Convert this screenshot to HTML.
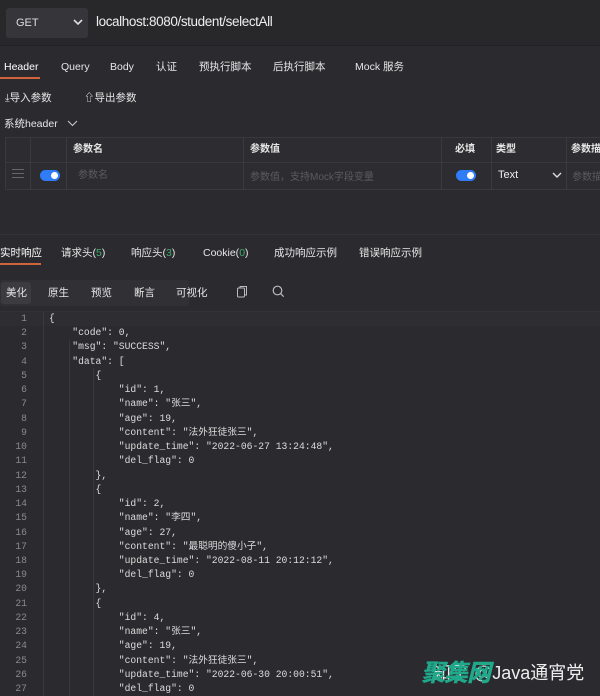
<!DOCTYPE html>
<html><head><meta charset="utf-8"><style>
*{margin:0;padding:0;box-sizing:border-box}
body{width:600px;height:696px;background:#2b2b2f;color:#e6e6e6;font-family:"Liberation Sans","Noto Sans CJK SC",sans-serif;font-size:11px;position:relative;overflow:hidden}
.a{position:absolute;white-space:nowrap;line-height:14px}
.top{left:0;top:0;width:600px;height:46px;background:#28282b;border-bottom:1px solid #232325}
.get{left:6px;top:8px;width:82px;height:30px;background:#35353a;border-radius:3px}
.mono{font-family:"Liberation Mono","Noto Sans CJK SC",monospace;font-size:9.7px;color:#dcdcdc}
.cell{position:absolute;border-right:1px solid #3a3a3f}
.tog{position:absolute;width:20px;height:11px;border-radius:6px;background:#2f7cf6}
.tog::after{content:"";position:absolute;right:2px;top:2px;width:7px;height:7px;border-radius:50%;background:#fff}
.g{color:#3fae6e}
.t{font-size:10.5px;top:60px}
</style></head><body>
<div class="a top"></div>
<div class="a get"></div>
<div class="a" style="left:16px;top:16px;font-size:11px;color:#ddd">GET</div>
<svg class="a" style="left:73px;top:18px" width="10" height="8"><path d="M1 2l4 4 4-4" stroke="#ddd" stroke-width="1.6" fill="none"/></svg>
<div class="a" style="left:96px;top:15px;font-size:13.5px;color:#eee;letter-spacing:-0.4px">localhost:8080/student/selectAll</div>

<div class="a t" style="left:4px;color:#fff">Header</div>
<div class="a" style="left:0;top:77px;width:40px;height:2px;background:#d0643a"></div>
<div class="a t" style="left:61px">Query</div>
<div class="a t" style="left:110px">Body</div>
<div class="a t" style="left:156px">认证</div>
<div class="a t" style="left:199px">预执行脚本</div>
<div class="a t" style="left:273px">后执行脚本</div>
<div class="a t" style="left:355px">Mock 服务</div>

<div class="a" style="left:5px;top:91px;font-size:10.5px">⤓导入参数</div>
<div class="a" style="left:84px;top:91px;font-size:10.5px">⇧导出参数</div>
<div class="a" style="left:4px;top:117px;font-size:10.5px">系统header</div>
<svg class="a" style="left:67px;top:120px" width="11" height="7"><path d="M1 1l4.5 4.5L10 1" stroke="#ccc" stroke-width="1" fill="none"/></svg>

<div class="a" style="left:5px;top:137px;width:600px;height:53px;border:1px solid #38383d;background:#2d2d31"></div>
<div class="a" style="left:5px;top:162px;width:600px;height:1px;background:#38383d"></div>
<div class="cell" style="left:5px;top:137px;width:26px;height:53px"></div>
<div class="cell" style="left:31px;top:137px;width:36px;height:53px"></div>
<div class="cell" style="left:67px;top:137px;width:177px;height:53px"></div>
<div class="cell" style="left:244px;top:137px;width:198px;height:53px"></div>
<div class="cell" style="left:442px;top:137px;width:50px;height:53px"></div>
<div class="cell" style="left:492px;top:137px;width:75px;height:53px"></div>
<div class="a" style="left:73px;top:143px;font-size:10px;font-weight:bold">参数名</div>
<div class="a" style="left:250px;top:143px;font-size:10px;font-weight:bold">参数值</div>
<div class="a" style="left:455px;top:143px;font-size:10px;font-weight:bold">必填</div>
<div class="a" style="left:496px;top:143px;font-size:10px;font-weight:bold">类型</div>
<div class="a" style="left:571px;top:143px;font-size:10px;font-weight:bold">参数描</div>
<div class="a" style="left:12px;top:169px;width:12px;height:1px;background:#666;box-shadow:0 4px #666,0 8px #666"></div>
<div class="tog" style="left:40px;top:170px"></div>
<div class="tog" style="left:456px;top:170px"></div>
<div class="a" style="left:78px;top:169px;font-size:10px;color:#5c5c60">参数名</div>
<div class="a" style="left:250px;top:171px;font-size:10px;color:#5c5c60">参数值，支持Mock字段变量</div>
<div class="a" style="left:498px;top:168px;font-size:11px;color:#eee">Text</div>
<svg class="a" style="left:552px;top:172px" width="10" height="7"><path d="M1 1l4 4 4-4" stroke="#ddd" stroke-width="1.4" fill="none"/></svg>
<div class="a" style="left:572px;top:171px;font-size:10px;color:#5c5c60">参数描</div>

<div class="a" style="left:0;top:234px;width:600px;height:1px;background:#333337"></div>
<div class="a" style="left:0;top:246px;font-size:10.5px;color:#fff">实时响应</div>
<div class="a" style="left:0;top:263px;width:41px;height:2px;background:#d0643a"></div>
<div class="a" style="left:61px;top:246px;font-size:10.5px">请求头(<span class="g">5</span>)</div>
<div class="a" style="left:131px;top:246px;font-size:10.5px">响应头(<span class="g">3</span>)</div>
<div class="a" style="left:203px;top:246px;font-size:10.5px">Cookie(<span class="g">0</span>)</div>
<div class="a" style="left:274px;top:246px;font-size:10.5px">成功响应示例</div>
<div class="a" style="left:359px;top:246px;font-size:10.5px">错误响应示例</div>

<div class="a" style="left:0;top:280px;width:189px;height:26px;background:#313135;border-radius:3px"></div>
<div class="a" style="left:1px;top:282px;width:30px;height:22px;background:#3b3b40;border-radius:3px"></div>
<div class="a" style="left:6px;top:286px;font-size:10.5px">美化</div>
<div class="a" style="left:48px;top:286px;font-size:10.5px">原生</div>
<div class="a" style="left:91px;top:286px;font-size:10.5px">预览</div>
<div class="a" style="left:134px;top:286px;font-size:10.5px">断言</div>
<div class="a" style="left:176px;top:286px;font-size:10.5px">可视化</div>
<svg class="a" style="left:236px;top:285px" width="12" height="14"><rect x="1.5" y="3" width="7" height="9" rx="1" stroke="#bbb" fill="none"/><path d="M4 3V1.5h6.5v8.5H8.5" stroke="#bbb" fill="none"/></svg>
<svg class="a" style="left:272px;top:285px" width="13" height="13"><circle cx="5.5" cy="5.5" r="4.3" stroke="#bbb" fill="none" stroke-width="1.2"/><path d="M8.7 8.7l3 3" stroke="#bbb" stroke-width="1.2"/></svg>

<div class="a" style="left:0;top:311px;width:600px;height:1px;background:#333337"></div>
<div class="a" style="left:0;top:312px;width:600px;height:14px;background:#2e2e32"></div>
<div class="a" style="left:43px;top:312px;width:1px;height:384px;background:#3a3a3e"></div>
<div class="a" style="left:69px;top:340px;width:1px;height:356px;background:#38383c"></div>
<div class="a" style="left:93px;top:368px;width:1px;height:328px;background:#38383c"></div>

<div class="a mono" style="left:0;top:312px;line-height:14.23px">
<pre class="mono" style="position:absolute;left:0;top:0;width:27px;text-align:right;color:#8a8a8a;line-height:14.23px">1
2
3
4
5
6
7
8
9
10
11
12
13
14
15
16
17
18
19
20
21
22
23
24
25
26
27</pre>
<pre class="mono" style="position:absolute;left:49px;top:0;line-height:14.23px">{
    "code": 0,
    "msg": "SUCCESS",
    "data": [
        {
            "id": 1,
            "name": "张三",
            "age": 19,
            "content": "法外狂徒张三",
            "update_time": "2022-06-27 13:24:48",
            "del_flag": 0
        },
        {
            "id": 2,
            "name": "李四",
            "age": 27,
            "content": "最聪明的傻小子",
            "update_time": "2022-08-11 20:12:12",
            "del_flag": 0
        },
        {
            "id": 4,
            "name": "张三",
            "age": 19,
            "content": "法外狂徒张三",
            "update_time": "2022-06-30 20:00:51",
            "del_flag": 0</pre>
</div>

<div class="a" style="left:433px;top:663px;font-size:18px;line-height:20px;color:#eee">知乎 @Java通宵党</div>
<div class="a" style="left:421px;top:660px;font-size:24px;line-height:28px;font-weight:900;color:#1fa88a;font-style:italic;letter-spacing:-1px">聚集网</div>
</body></html>
